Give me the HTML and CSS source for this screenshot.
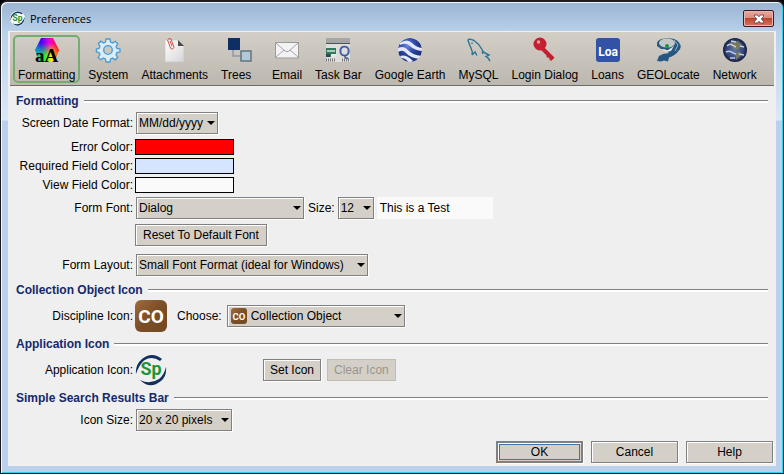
FILE: index.html
```html
<!DOCTYPE html>
<html lang="en">
<head>
<meta charset="utf-8">
<title>Preferences</title>
<link rel="stylesheet" href="styles.css">
</head>
<body>
<svg class="defs" aria-hidden="true">
  <defs>
    <linearGradient id="brown" x1="0" y1="0" x2="1" y2="1"><stop offset="0" stop-color="#a06c3c"/><stop offset=".5" stop-color="#7c4e25"/><stop offset="1" stop-color="#734822"/></linearGradient>
    <symbol id="co" viewBox="0 0 32 32">
      <rect width="32" height="32" rx="6" fill="url(#brown)"/>
      <text x="16" y="23" text-anchor="middle" class="logo-text" font-size="19" fill="#fff">CO</text>
    </symbol>
    <symbol id="sp" viewBox="0 0 32 32">
      <path d="M27 5Q17-3 7 5Q0 11 1 20Q4 11 9 6.500Q17 1.500 25 7Z" fill="#12305f"/>
      <path d="M5 26Q15 36 26 27Q32 22 31 13Q29 21 24 25Q15 31 5 26Z" fill="#12305f"/>
      <text x="16" y="21" text-anchor="middle" class="logo-text" font-size="18" fill="#1f9437">Sp</text>
    </symbol>
  </defs>
</svg>
<div class="window">
  <header class="titlebar">
    <svg class="app-icon" viewBox="0 0 32 32"><circle cx="16" cy="16" r="16" fill="#f2f7f8"/><use href="#sp"/></svg>
    <h1>Preferences</h1>
    <button class="close" aria-label="Close"><svg viewBox="0 0 14 12"><path d="M2.500 2h3L7 3.800 8.500 2h3v1.500L9.300 6l2.200 2.500V10h-3L7 8.200 5.500 10h-3V8.500L4.700 6 2.500 3.500z" fill="#fff" stroke="#4d3a48" stroke-width=".8"/></svg></button>
  </header>
  <main class="content">
    <nav class="toolbar">
      <button class="tool active">
        <svg viewBox="0 0 24 24">
          <defs><linearGradient id="hue"><stop offset="0" stop-color="#06e"/><stop offset=".25" stop-color="#40f"/><stop offset=".6" stop-color="#e0d"/><stop offset="1" stop-color="#f02"/></linearGradient>
          <linearGradient id="low"><stop offset="0" stop-color="#0cb"/><stop offset=".4" stop-color="#2e3"/><stop offset=".7" stop-color="#fe0"/><stop offset="1" stop-color="#f40"/></linearGradient>
          <linearGradient id="fade" x2="0" y2="1"><stop offset=".2" stop-color="#000"/><stop offset=".75" stop-color="#fff"/></linearGradient>
          <mask id="m"><rect width="24" height="24" fill="url(#fade)"/></mask></defs>
          <path d="M6 0h12l6 12-5 12H5L0 12z" fill="url(#hue)"/><path d="M6 0h12l6 12-5 12H5L0 12z" fill="url(#low)" mask="url(#m)"/>
          <text x="0" y="24" font-family="Liberation Serif, serif" font-weight="700" font-size="19">aA</text>
        </svg><span>Formatting</span></button>
      <button class="tool">
        <svg viewBox="0 0 24 24"><path d="M10 1h4l.6 3 2 1 2.700-1.700 2.500 2.500L20 8.500l1 2 3 .5v3l-3 .6-1 2 1.700 2.700-2.500 2.500-2.700-1.700-2 1-.5 2.900h-4l-.6-3-2-1-2.700 1.700-2.500-2.500L4 16.500l-1-2-2.600-.5v-3L3 10.400l1-2-1.700-2.700 2.500-2.500L7.500 5l2-1z" fill="#dcecf8" stroke="#4a9bd0" stroke-width="1.300"/><circle cx="12" cy="12" r="4.300" fill="#cbc8c0" stroke="#4a9bd0" stroke-width="1.300"/></svg><span>System</span></button>
      <button class="tool">
        <svg viewBox="0 0 24 24"><defs><linearGradient id="paper" x2="1" y2="1"><stop stop-color="#fff"/><stop offset="1" stop-color="#d5d5d8"/></linearGradient></defs><path d="M2 2h13l6 6v16H2z" fill="url(#paper)" stroke="#c4c3c2" stroke-width=".7"/><path d="M15 2v6h6z" fill="#4c4c4c"/><path d="M4.500 2l3 8q1 2 2.500.7Q11.500 10 10.500 8L8 1Q6-.5 4.500 2zM7 3l2 5" fill="none" stroke="#d2504b" stroke-width="1"/></svg><span>Attachments</span></button>
      <button class="tool trees">
        <svg viewBox="0 0 24 24"><path d="M5 12v6h8" fill="none" stroke="#8d9aaa" stroke-width="1.500"/><path d="M0 0h12v12H0z" fill="#0e2f63"/><path d="M13 13h10v10H13z" fill="#b4c8d4" stroke="#5d7486" stroke-width="1.500"/></svg><span>Trees</span></button>
      <button class="tool">
        <svg viewBox="0 0 24 24"><path d="M.5 4.500h23v15.500H.5z" fill="#f3f3f6" stroke="#999"/><path d="M1 5l9 8q2 1.500 4 0l9-8M1 19l8-7m14 7-8-7" fill="none" stroke="#a5a5a8"/></svg><span>Email</span></button>
      <button class="tool">
        <svg viewBox="0 0 24 24"><path d="M0 0h24v24H0z" fill="#dededd"/><path d="M0 0h24v5H0z" fill="#a5a7a7"/><path d="M0 5h24v1H0z" fill="#4a554e"/><path d="M0 10h10v9H0z" fill="#36785b"/><path d="M1 12h8v2H1z" fill="#a9cdb9"/><path d="M0 16h4v3H0z" fill="#345"/><path d="M5 16h5v3H5z" fill="#e5e7ec"/><text x="13" y="18" font-family="Liberation Sans, sans-serif" font-size="14" fill="#3558a0" stroke="#3558a0" stroke-width=".4">Q</text><path d="M0 22h10m6 0h8" stroke="#777" stroke-width="3" stroke-dasharray="1 1"/></svg><span>Task Bar</span></button>
      <button class="tool">
        <svg viewBox="0 0 24 24"><defs><radialGradient id="ge" cx=".4" cy=".3"><stop stop-color="#7289dd"/><stop offset=".6" stop-color="#304cac"/><stop offset="1" stop-color="#203483"/></radialGradient><clipPath id="gc"><circle cx="12" cy="12" r="12"/></clipPath></defs><g clip-path="url(#gc)"><circle cx="12" cy="12" r="12" fill="url(#ge)"/><path d="M2 5Q9 0 14 5t11 5v3Q17 13 12 8 8 4 2 7zM0 10q6-3 10 2t14 6l-2 3Q12 20 8 15 5 11 0 14zM2 18q6-2 13 5l-4 2Q8 20 3 20z" fill="#e2e8fa"/></g></svg><span>Google Earth</span></button>
      <button class="tool">
        <svg viewBox="0 0 24 24"><path d="M5 17Q6 14 4 10T1 2Q2 0 7 2.500Q12 6 14 10T18 15L22 17L19 18.500L21 20L23 23M5 17L8 14L10 17.500M15 13.500L16 16M5 4.500V6" fill="none" stroke="#2c7493" stroke-width="1.400"/></svg><span>MySQL</span></button>
      <button class="tool">
        <svg viewBox="0 0 24 24"><g fill="none" stroke="#c41f30"><circle cx="7" cy="6" r="4" stroke-width="5"/><path d="M9 10l11 11" stroke-width="4"/><path d="M14 19l3-3m0 6l3-3" stroke-width="2.500"/></g><circle cx="7" cy="6" r="2" fill="#c41f30"/><circle cx="5.500" cy="4" r="1.700" fill="#f3a2a4"/></svg><span>Login Dialog</span></button>
      <button class="tool">
        <svg viewBox="0 0 24 24"><rect width="24" height="24" rx="3" fill="#3152a5"/><text x="12" y="18" text-anchor="middle" class="logo-text" font-size="12" fill="#fff">Loa</text></svg><span>Loans</span></button>
      <button class="tool">
        <svg viewBox="0 0 24 24"><path d="M1 7Q0 1 9 .5q10-1 14 4t-1 9q-3 4-9 6l-1 4-4-1-3 1-4-.5 2-5 4-2 6-1-4-4H5L1 8z" fill="#245883"/><ellipse cx="11" cy="5" rx="8" ry="4.500" fill="#c5c7c7"/><path d="M2 8q5 5 10 4l6-4-3 5-5 1z" fill="#e5e5e0"/><path d="M18 2l4 5-3 6" fill="none" stroke="#9db7c4"/><circle cx="11" cy="8" r="2" fill="#169445"/></svg><span>GEOLocate</span></button>
      <button class="tool">
        <svg viewBox="0 0 24 24"><defs><radialGradient id="earth"><stop stop-color="#6077ae"/><stop offset=".7" stop-color="#334776"/><stop offset="1" stop-color="#151e40"/></radialGradient></defs><circle cx="12" cy="12" r="12" fill="url(#earth)"/><path d="M8 4l7-1 4 4-4 5-4-1-4-4zM12 15l5-2 1 4-5 5z" fill="#77785f"/><path d="M4 8q3-3 5-1l4 2M17 8l4 1M3 14q4-2 7 1l3 1M16 16l5 1M7 20l5 0M8 3l5 1" fill="none" stroke="#c3cbe2" stroke-width="1.400"/></svg><span>Network</span></button>
    </nav>

    <form class="prefs">
      <section>
        <h2>Formatting</h2>
        <div class="row">
          <label for="date">Screen Date Format:</label>
          <span class="select date"><select id="date"><option>MM/dd/yyyy</option></select></span>
        </div>
        <div class="colors">
          <div class="row"><label for="err">Error Color:</label><button type="button" id="err" class="swatch red"></button></div>
          <div class="row"><label for="req">Required Field Color:</label><button type="button" id="req" class="swatch blue"></button></div>
          <div class="row"><label for="view">View Field Color:</label><button type="button" id="view" class="swatch pale"></button></div>
        </div>
        <div class="row">
          <label for="font">Form Font:</label>
          <span class="select font"><select id="font"><option>Dialog</option></select></span>
          <label class="inline" for="size">Size:</label>
          <span class="select size"><select id="size"><option>12</option></select></span>
          <output class="sample">This is a Test</output>
        </div>
        <div class="row reset"><button type="button" class="btn">Reset To Default Font</button></div>
        <div class="row">
          <label for="layout">Form Layout:</label>
          <span class="select layout"><select id="layout"><option>Small Font Format (ideal for Windows)</option></select></span>
        </div>
      </section>
      <section>
        <h2>Collection Object Icon</h2>
        <div class="row icon-row">
          <span class="label">Discipline Icon:</span>
          <svg class="big-icon"><use href="#co"/></svg>
          <label class="inline choose" for="disc">Choose:</label>
          <span class="select disc"><svg class="option-icon"><use href="#co"/></svg><select id="disc"><option>Collection Object</option></select></span>
        </div>
      </section>
      <section class="tight">
        <h2>Application Icon</h2>
        <div class="row icon-row">
          <span class="label">Application Icon:</span>
          <svg class="big-icon"><use href="#sp"/></svg>
          <div class="icon-actions"><button type="button" class="btn">Set Icon</button><button type="button" class="btn" disabled>Clear Icon</button></div>
        </div>
      </section>
      <section class="tight">
        <h2>Simple Search Results Bar</h2>
        <div class="row">
          <label for="isize">Icon Size:</label>
          <span class="select isize"><select id="isize"><option>20 x 20 pixels</option></select></span>
        </div>
      </section>
    </form>
    <footer class="actions">
      <button class="btn default">OK</button><button class="btn">Cancel</button><button class="btn">Help</button>
    </footer>
  </main>
</div>
</body>
</html>
```
FILE: styles.css
```css
* { box-sizing: border-box; }
body { margin: 0; background: #000; font: 12px/14px "Liberation Sans", sans-serif; color: #000; }
button, select { font: inherit; color: inherit; }
h1, h2 { margin: 0; }
.defs { position: absolute; width: 0; height: 0; }
.logo-text { font-family: Roboto, "Liberation Sans", sans-serif; font-weight: 700; }
.window {
  display: flex; flex-direction: column; min-height: 100vh;
  padding: 0 7px 7px; border: 1px solid #1b1b20; border-top-width: 2px;
  border-radius: 7px 7px 0 0;
  background: linear-gradient(#99b4d1, #b9d1ea 30px, #dce8f6 118px, #b9d1ea 119px);
  box-shadow: inset 1px 1px #f4f9fd, inset -1px -1px #35cfe8;
}
.titlebar { display: flex; align-items: center; height: 29px; padding: 4px 2px 0; gap: 5px; }
.app-icon { width: 15px; height: 15px; }
.titlebar h1 { flex: 1; font: 11px/16px "Open Sans", sans-serif; }
.close {
  display: grid; place-items: center; width: 31px; height: 17px; padding: 0;
  border: 1px solid #451522; border-radius: 2px; box-shadow: inset 0 0 0 1px #eab5ac;
  background: linear-gradient(#e9a99d, #d98b7d 48%, #bd4330 50%, #d6775f);
}
.close svg { width: 14px; height: 12px; }
.content {
  flex: 1; display: flex; flex-direction: column;
  background: #efefef; border: solid #f0f0f0; border-width: 1px 2px 2px;
}
.toolbar {
  display: flex; gap: 3px; padding: 3px 3px 2px; height: 54px;
  background: linear-gradient(#d3cfc7, #bcb8b0); border-bottom: 1px solid #6c6c68;
}
.tool {
  display: flex; flex-direction: column; align-items: center; gap: 6px;
  padding: 1px 3px 0; border: 2px solid transparent; border-radius: 5px;
  background: none; white-space: nowrap;
}
.tool svg { flex: none; width: 24px; height: 24px; overflow: visible; }
.tool.active { border-color: #74ad70; }
.trees { width: 48px; }
.trees span { align-self: flex-start; }
.prefs { padding: 8px 6px 0; }
h2 { display: flex; align-items: center; gap: 5px; font-size: 12px; line-height: 14px; color: #14296b; white-space: nowrap; }
h2::after { content: ""; flex: 1; height: 2px; border-top: 1px solid #808080; background: #fff; }
.row { display: flex; align-items: center; gap: 3px; }
.row > label, .label { flex: none; width: 117px; text-align: right; white-space: nowrap; }
.row > label.inline { width: auto; margin-left: 1px; }
section > .row { margin-top: 4px; }
.colors { display: grid; gap: 3px; margin: 5px 0 4px; }
.colors .row { gap: 2px; }
.swatch { width: 99px; height: 16px; padding: 0; border: 1px solid #000; }
.red { background: #f00; }
.blue { background: #d5e4ff; }
.pale { background: #fafafa; }
.select { position: relative; height: 22px; }
.select select {
  appearance: none; width: 100%; height: 22px; padding: 0 12px 0 2px;
  border: 1px solid #808080; border-radius: 0; background: #d4d0c8;
  box-shadow: inset 1px 1px #fff, 1px 1px #fff;
}
.select::after {
  content: ""; position: absolute; right: 3px; top: 9px;
  border: 4px solid transparent; border-top-color: #000; border-bottom: 0;
}
.date { width: 82px; }
.font { width: 168px; }
.size { width: 36px; }
.layout { width: 232px; }
.disc { width: 178px; }
.isize { width: 96px; }
.sample { width: 116px; padding: 4px 3px; background: #fafafa; }
.btn {
  height: 22px; padding: 0 6px; border: 1px solid #808080; background: #d4d0c8;
  box-shadow: inset 1px 1px #fff, 1px 1px #fff; white-space: nowrap;
}
.btn:disabled { color: #99968f; border-color: #c0bdb1; box-shadow: none; }
section > .reset { padding-left: 119px; margin: 5px 0 8px; }
.reset .btn { padding: 0 7px; }
section + section { margin-top: 7px; }
section + .tight { margin-top: 5px; }
section > .icon-row { margin-top: 3px; }
.big-icon { width: 32px; height: 32px; margin-left: -1px; }
.row > label.choose { margin: 0 2px 0 7px; }
.option-icon { position: absolute; left: 4px; top: 3px; width: 16px; height: 16px; pointer-events: none; }
.select.disc select { padding-left: 23px; }
.icon-actions { display: flex; gap: 6px; margin-left: 93px; }
.actions { display: flex; justify-content: flex-end; gap: 8px; margin-top: auto; padding: 0 1px 1px; }
.actions .btn { width: 87px; }
.actions .default { border-width: 2px; outline: 1px solid #4a6ea9; outline-offset: -4px; }
```
